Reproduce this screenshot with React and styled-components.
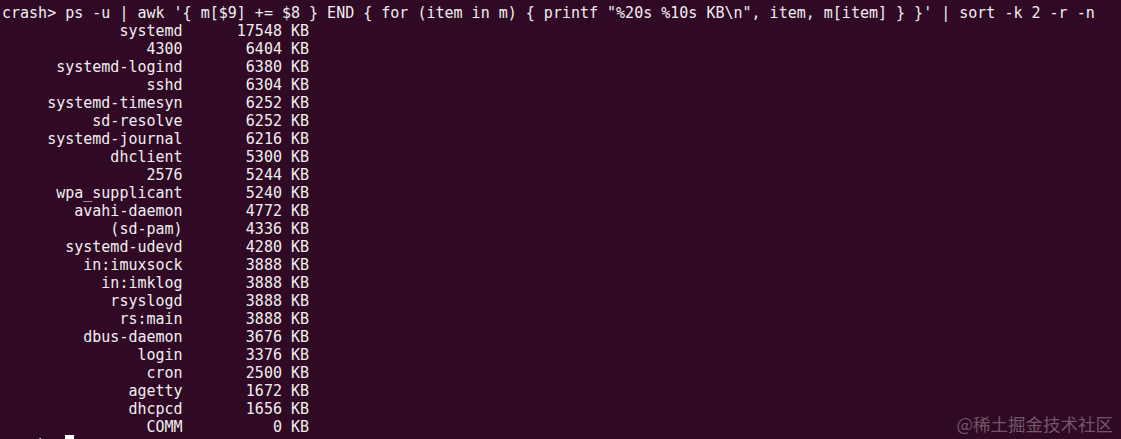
import React from 'react';
import styled, { createGlobalStyle } from 'styled-components';

const GlobalStyle = createGlobalStyle`
  html, body {
    margin: 0;
    padding: 0;
    background: #300a24;
    overflow: hidden;
  }
`;

const Terminal = styled.div`
  width: 1121px;
  height: 439px;
  box-sizing: border-box;
  padding: 4px 0 0 2px;
  background: #300a24;
  color: #f0eef0;
  font-family: 'DejaVu Sans Mono', 'Liberation Mono', monospace;
  font-size: 15px;
  line-height: 18px;
  overflow: hidden;
  position: relative;
`;

const Line = styled.div`
  white-space: pre;
  height: 18px;
`;

const Cursor = styled.span`
  display: inline-block;
  width: 9px;
  height: 16px;
  background: #ffffff;
  vertical-align: top;
  margin-top: -1px;
`;

const Watermark = styled.div`
  position: absolute;
  right: 8px;
  bottom: 6px;
  font-family: 'Noto Sans CJK SC', 'Noto Sans', sans-serif;
  font-size: 17.5px;
  color: rgba(255, 255, 255, 0.33);
`;

const command =
  'crash> ps -u | awk \'{ m[$9] += $8 } END { for (item in m) { printf "%20s %10s KB\\n", item, m[item] } }\' | sort -k 2 -r -n';

const rows = [
  ['systemd', 17548],
  ['4300', 6404],
  ['systemd-logind', 6380],
  ['sshd', 6304],
  ['systemd-timesyn', 6252],
  ['sd-resolve', 6252],
  ['systemd-journal', 6216],
  ['dhclient', 5300],
  ['2576', 5244],
  ['wpa_supplicant', 5240],
  ['avahi-daemon', 4772],
  ['(sd-pam)', 4336],
  ['systemd-udevd', 4280],
  ['in:imuxsock', 3888],
  ['in:imklog', 3888],
  ['rsyslogd', 3888],
  ['rs:main', 3888],
  ['dbus-daemon', 3676],
  ['login', 3376],
  ['cron', 2500],
  ['agetty', 1672],
  ['dhcpcd', 1656],
  ['COMM', 0],
];

const fmt = (name, kb) =>
  name.padStart(20, ' ') + ' ' + String(kb).padStart(10, ' ') + ' KB';

export default function App() {
  return (
    <>
      <GlobalStyle />
      <Terminal>
        <Line>{command}</Line>
        {rows.map(([name, kb]) => (
          <Line key={name}>{fmt(name, kb)}</Line>
        ))}
        <Line>
          crash&gt; <Cursor />
        </Line>
        <Watermark>@稀土掘金技术社区</Watermark>
      </Terminal>
    </>
  );
}
